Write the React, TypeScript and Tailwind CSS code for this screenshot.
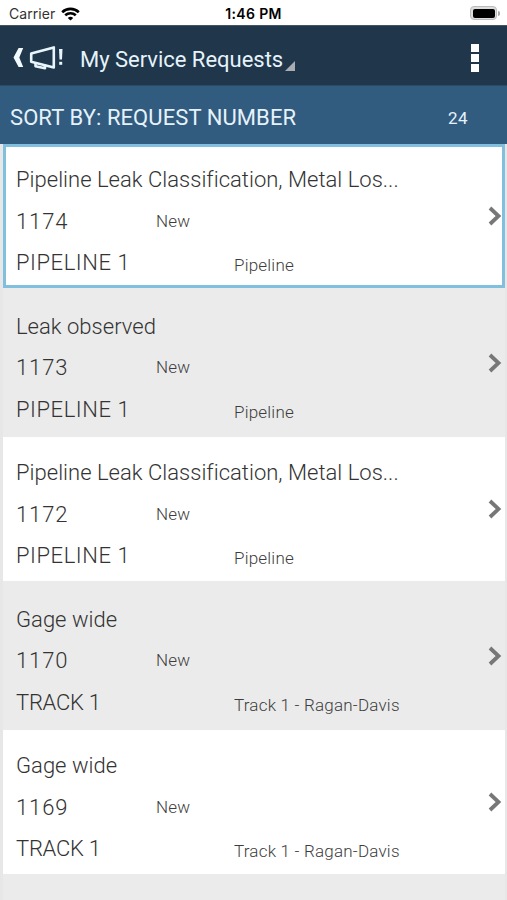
type Request = {
  title: string;
  id: string;
  asset: string;
  assetSpacing: string;
  location: string;
};

const leak = {
  title: "Pipeline Leak Classification, Metal Los...",
  asset: "PIPELINE 1",
  assetSpacing: "tracking-[0.55px]",
  location: "Pipeline",
};

const track = {
  title: "Gage wide",
  asset: "TRACK 1",
  assetSpacing: "tracking-[-0.25px]",
  location: "Track 1 - Ragan-Davis",
};

const requests: Request[] = [
  { ...leak, id: "1174" },
  { ...leak, id: "1173", title: "Leak observed" },
  { ...leak, id: "1172" },
  { ...track, id: "1170" },
  { ...track, id: "1169" },
];

function StatusBar() {
  return (
    <div className="grid h-[25px] grid-cols-3 items-center bg-white pt-[3px] font-['Inter',sans-serif] text-[14px] leading-none text-black">
      <div className="flex items-center gap-[6px] pl-[9px]">
        <span className="text-[#333] tracking-[0.05px]">Carrier</span>
        <svg width="19" height="14" viewBox="0 0 19 14" fill="none" stroke="#000" strokeWidth="2.600">
          <path d="M1.2 5.2C5.8.8 13.2.8 17.8 5.2" />
          <path d="M4.2 8.3c3-2.8 7.600-2.800 10.600 0" />
          <path d="M6.800 10.900 9.500 13.600l2.700-2.700c-1.600-1.400-3.800-1.400-5.400 0z" fill="#000" stroke="none" />
        </svg>
      </div>
      <span className="text-center font-semibold tracking-[0.35px]">1:46 PM</span>
      <div className="flex items-center justify-end pr-[7px] pb-[2px]">
        <div className="h-[14px] w-[27px] rounded-[4px] border border-[#bbb] bg-[#ddd] p-[1.500px]">
          <div className="h-full rounded-[2px] bg-black" />
        </div>
        <div className="ml-px h-[5px] w-[2px] rounded-r-full bg-[#aaa]" />
      </div>
    </div>
  );
}

function NavBar() {
  return (
    <header className="flex h-[60px] items-center border-t border-[#415465] bg-[#20364a] text-[#e6f3fb]">
      <svg className="ml-[12px] mt-[3px] shrink-0" width="54" height="26" viewBox="0 0 54 26" fill="none">
        <path d="M6.600 4h4.600L7.300 13.500l3.900 9.500H6.600L1.500 13.500z" fill="#f2faff" />
        <path d="M19.200 9.600 41.800 3.400v20L19.200 17.800z" stroke="#e8f5fd" strokeWidth="2.600" strokeLinejoin="round" />
        <path d="M23.500 18.500v3.700l9.500 2v-3.500" stroke="#e8f5fd" strokeWidth="2.600" strokeLinejoin="round" />
        <path d="M47 5h3.500l-.5 10.500h-2.500z" fill="#e8f5fd" />
        <path d="M47.200 17.800h3v3h-3z" fill="#e8f5fd" />
      </svg>
      <h1 className="ml-[14px] mt-[8px] whitespace-nowrap text-[22px] leading-[30px] tracking-[-0.02px]">My Service Requests</h1>
      <svg className="ml-[2px] mt-[20px]" width="10" height="10" viewBox="0 0 10 10">
        <path d="M10 0v10H0z" fill="#a9adb1" />
      </svg>
      <div className="ml-auto mr-[28px] flex flex-col gap-[2px] pt-[5px]">
        <i className="size-2 bg-white" />
        <i className="size-2 bg-white" />
        <i className="size-2 bg-white" />
      </div>
    </header>
  );
}

function RequestRow({ request, index }: { request: Request; index: number }) {
  const selected = index === 0;
  const surface = selected
    ? "border-[3px] border-[#80bfde] bg-white"
    : index % 2
      ? "border-[3px] border-[#ebebeb] bg-[#ebebeb]"
      : "border-y border-r-0 border-[#fefefe] bg-white px-[3px] py-[2px]";
  return (
    <li className="h-[146.600px] pb-[2.500px]">
      <div className={`flex h-full items-center justify-between ${surface}`}>
        <div className="flex h-[124px] flex-col pl-[10px] text-[22px] font-light leading-[51px] text-[#333]">
          <div className="h-[41.500px] whitespace-nowrap tracking-[0.02px]">{request.title}</div>
          <div className="flex h-[41.500px]">
            <span className="w-[140px] tracking-[0.9px]">{request.id}</span>
            <span className="text-[17px] tracking-[0.2px] text-[#3d3d3d]">New</span>
          </div>
          <div className="flex h-[41.500px]">
            <span className={`w-[218px] ${request.assetSpacing}`}>{request.asset}</span>
            <span className="pt-[3px] text-[17px] tracking-[0.21px] text-[#3d3d3d]">{request.location}</span>
          </div>
        </div>
        <svg width="14" height="20" viewBox="0 0 14 20" fill="none" stroke="#777" strokeWidth="3.800">
          <path d="m2 2 8.500 8L2 18" />
        </svg>
      </div>
    </li>
  );
}

export default function App() {
  return (
    <main className="flex h-[900px] w-[507px] flex-col overflow-hidden bg-[#e7e7e7] font-['Roboto',sans-serif]">
      <StatusBar />
      <NavBar />
      <div className="flex h-[59px] shrink-0 items-center justify-between border-t border-[#294b69] bg-[#325c7f] pl-[10px] pr-[39px] pt-[5px] text-[#e6f2fb]">
        <span className="text-[22px] tracking-[0.08px]">SORT BY: REQUEST NUMBER</span>
        <span className="pt-[3px] text-[17px] tracking-[0.5px]">24</span>
      </div>
      <ul className="ml-[3px] mr-[2px] flex-1 bg-[#ebebeb]">
        {requests.map((request, index) => (
          <RequestRow key={request.id} request={request} index={index} />
        ))}
      </ul>
    </main>
  );
}
